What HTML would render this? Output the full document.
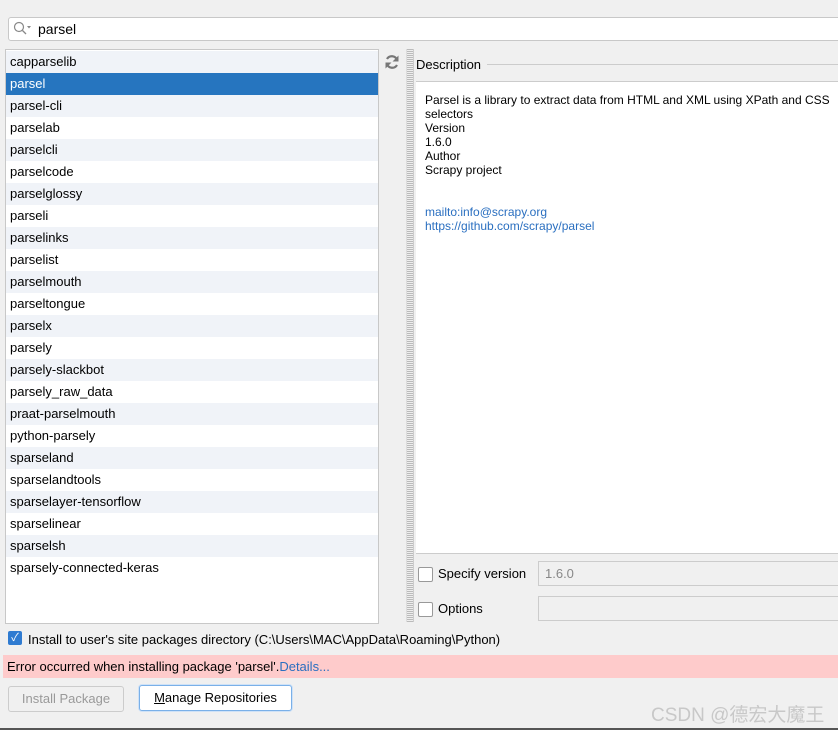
<!DOCTYPE html><html><head><style>
body{margin:0;width:838px;height:730px;background:#f0f0f0;font-family:"Liberation Sans","Noto Sans CJK SC",sans-serif;font-size:13px;color:#000;position:relative;overflow:hidden}
.a{position:absolute}
.row{height:22px;line-height:22px;padding-left:4px;font-size:13px}
.row:nth-child(odd){background:#f0f3f8}
.row.sel{background:#2675bf;color:#fff}
.cb{position:absolute;width:13px;height:13px;border:1px solid #999;background:#fff;border-radius:2px}
</style></head><body>
<div class="a" style="left:8px;top:17px;width:840px;height:22px;border:1px solid #c8c8c8;border-radius:3px;background:#fff"></div>
<svg class="a" style="left:13px;top:21px" width="20" height="14"><circle cx="6" cy="6" r="4.5" fill="none" stroke="#888" stroke-width="1.2"/><line x1="9.5" y1="9.5" x2="13" y2="13" stroke="#888" stroke-width="1.3"/><path d="M14 5h4l-2 2.5z" fill="#888"/></svg>
<div class="a" style="left:38px;top:21px;font-size:14px">parsel</div>
<div class="a" style="left:5px;top:49px;width:372px;height:572px;border:1px solid #c8c8c8;background:#fff;padding-top:1px">
<div class="row">capparselib</div><div class="row sel">parsel</div><div class="row">parsel-cli</div><div class="row">parselab</div><div class="row">parselcli</div><div class="row">parselcode</div><div class="row">parselglossy</div><div class="row">parseli</div><div class="row">parselinks</div><div class="row">parselist</div><div class="row">parselmouth</div><div class="row">parseltongue</div><div class="row">parselx</div><div class="row">parsely</div><div class="row">parsely-slackbot</div><div class="row">parsely_raw_data</div><div class="row">praat-parselmouth</div><div class="row">python-parsely</div><div class="row">sparseland</div><div class="row">sparselandtools</div><div class="row">sparselayer-tensorflow</div><div class="row">sparselinear</div><div class="row">sparselsh</div><div class="row" style="background:#fff">sparsely-connected-keras</div>
</div>
<svg class="a" style="left:384px;top:54px" width="16" height="16"><path d="M13 6A5.5 5.5 0 0 0 3 5M3 10A5.5 5.5 0 0 0 13 11" fill="none" stroke="#777" stroke-width="2.2"/><path d="M14.5 1.5v6h-6z M1.5 14.5v-6h6z" fill="#777"/></svg>
<div class="a" style="left:406px;top:49px;width:6px;height:573px;background:repeating-linear-gradient(0deg,#bbb 0 1px,#eee 1px 2px);border-left:1px solid #ddd;border-right:1px solid #ccc"></div>
<div class="a" style="left:416px;top:57px">Description</div>
<div class="a" style="left:487px;top:64px;width:351px;height:1px;background:#ccc"></div>
<div class="a" style="left:416px;top:81px;width:422px;height:471px;background:#fff;border-top:1px solid #ccc;border-bottom:1px solid #ccc;font-size:12px;line-height:14px">
<div style="padding:11px 0 0 9px">Parsel is a library to extract data from HTML and XML using XPath and CSS<br>selectors<br>Version<br>1.6.0<br>Author<br>Scrapy project<br><br><br><span style="color:#2a6fc0">mailto:info@scrapy.org<br>https://github.com/scrapy/parsel</span></div></div>
<div class="cb" style="left:418px;top:567px"></div><div class="a" style="left:438px;top:566px">Specify version</div>
<div class="a" style="left:538px;top:561px;width:300px;height:23px;border:1px solid #ccc;background:#f0f0f0;color:#888;line-height:23px;padding-left:6px">1.6.0</div>
<div class="cb" style="left:418px;top:602px"></div><div class="a" style="left:438px;top:601px">Options</div>
<div class="a" style="left:538px;top:596px;width:300px;height:23px;border:1px solid #ccc;background:#f0f0f0"></div>
<div class="a" style="left:8px;top:631px;width:14px;height:14px;background:#2f7bd1;border-radius:2px;color:#fff;font-size:11px;text-align:center;line-height:14px">✓</div>
<div class="a" style="left:28px;top:632px">Install to user's site packages directory (C:\Users\MAC\AppData\Roaming\Python)</div>
<div class="a" style="left:3px;top:655px;width:835px;height:23px;background:#fecbcb;line-height:23px;padding-left:4px">Error occurred when installing package 'parsel'.<span style="color:#2a6fc0">Details...</span></div>
<div class="a" style="left:8px;top:686px;width:114px;height:24px;border:1px solid #ccc;border-radius:3px;color:#999;text-align:center;line-height:24px">Install Package</div>
<div class="a" style="left:139px;top:685px;width:151px;height:24px;border:1px solid #7ab0e8;box-shadow:0 0 0 1px #cfe2f7;border-radius:3px;background:#fff;text-align:center;line-height:24px"><u>M</u>anage Repositories</div>
<div class="a" style="left:651px;top:700px;font-size:19px;color:#c8c8c8">CSDN @德宏大魔王</div>
<div class="a" style="left:0;top:728px;width:838px;height:2px;background:#555"></div>
</body></html>
